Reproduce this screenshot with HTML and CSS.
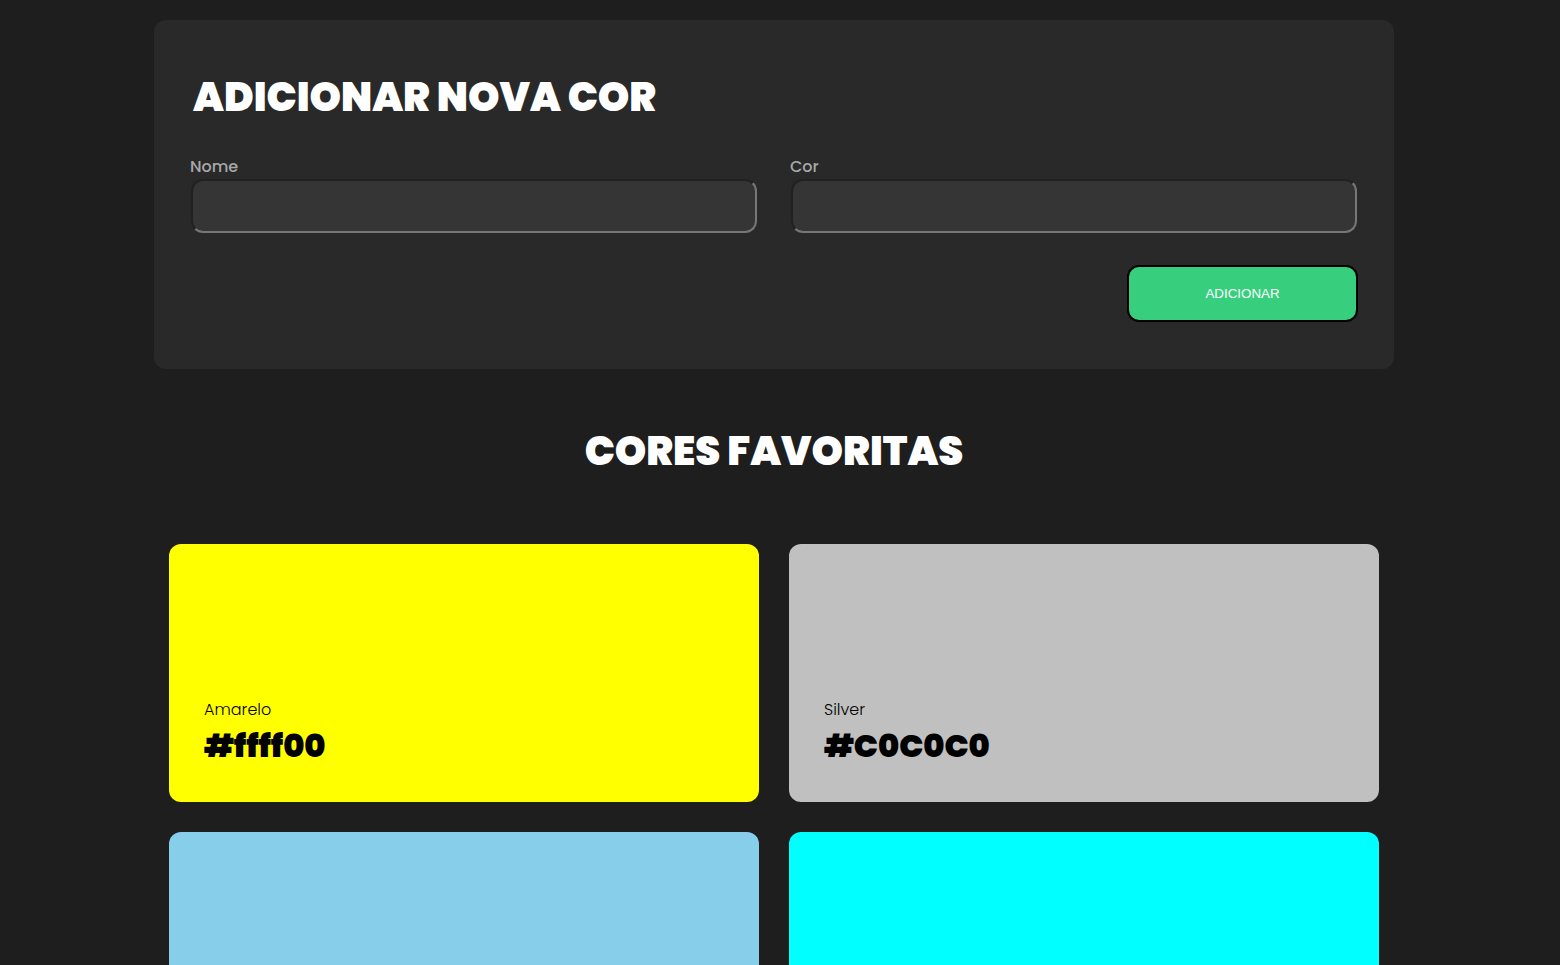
FILE: index.html
```html
<!DOCTYPE html>
<html lang="pt-BR">
<head>
<meta charset="utf-8">
<meta name="viewport" content="width=device-width, initial-scale=1">
<title>Cores favoritas</title>
<link rel="stylesheet" href="styles.css">
</head>
<body>
<main class="container">
  <form class="form">
    <h1 class="title form-title">ADICIONAR NOVA COR</h1>
    <div class="fields">
      <div class="field">
        <label class="label" for="nome">Nome</label>
        <input class="input" id="nome" name="nome" type="text">
      </div>
      <div class="field">
        <label class="label" for="cor">Cor</label>
        <input class="input" id="cor" name="cor" type="text">
      </div>
    </div>
    <button class="button" type="button">ADICIONAR</button>
  </form>
  <section class="favorites">
    <h2 class="title favorites-title">CORES FAVORITAS</h2>
    <div class="cards">
      <article class="card yellow">
        <p class="card-name">Amarelo</p>
        <h3 class="card-code">#ffff00</h3>
      </article>
      <article class="card silver">
        <p class="card-name">Silver</p>
        <h3 class="card-code">#C0C0C0</h3>
      </article>
      <article class="card skyblue"></article>
      <article class="card cyan"></article>
    </div>
  </section>
</main>
</body>
</html>
```
FILE: styles.css
```css
* {
  box-sizing: border-box;
  margin: 0;
}

html {
  background: #1e1e1e;
  scrollbar-width: none;
}

body {
  padding: 20px 12px 20px 0;
  color: #fff;
  font-family: Poppins, Inter, sans-serif;
}

.container {
  max-width: 1240px;
  margin: 0 auto;
}

.form {
  display: flex;
  flex-direction: column;
  padding: 47px 36px;
  border-radius: 12px;
  background: #292929;
}

.title {
  font-size: 40px;
  font-weight: 900;
  line-height: 60px;
}

.form-title {
  padding-left: 3px;
}

.fields {
  display: grid;
  grid-template-columns: 1fr 1fr;
  gap: 32px;
  margin-top: 28px;
}

.field {
  display: flex;
  flex-direction: column;
}

.label {
  color: #a8a8a8;
  font-size: 16px;
  font-weight: 500;
  line-height: 24px;
}

.input {
  height: 54px;
  margin: 0 1px 1px;
  padding: 0 16px;
  border: 2px inset #767676;
  border-radius: 12px;
  background: #353535;
  color: #fff;
  font-size: 16px;
}

.button {
  align-self: flex-end;
  width: 231px;
  height: 57px;
  margin-top: 31px;
  border: 2px solid #000;
  border-radius: 12px;
  background: #37cf7e;
  color: #fff;
  font-family: "Liberation Sans", Arial, sans-serif;
}

.favorites-title {
  margin-top: 52px;
  text-align: center;
}

.cards {
  display: grid;
  grid-template-columns: 1fr 1fr;
  gap: 30px;
  margin-top: 63px;
  padding: 0 15px;
}

.card {
  display: flex;
  flex-direction: column;
  justify-content: flex-end;
  min-height: 258px;
  padding: 32px 35px;
  border-radius: 12px;
  color: #000;
}

.card-name {
  font-size: 16px;
  font-weight: 300;
  line-height: 24px;
}

.card-code {
  font-size: 32px;
  font-weight: 900;
  line-height: 48px;
}

.yellow {
  background: #ffff00;
}

.silver {
  background: #c0c0c0;
}

.skyblue {
  background: #87ceeb;
}

.cyan {
  background: #00ffff;
}
```
